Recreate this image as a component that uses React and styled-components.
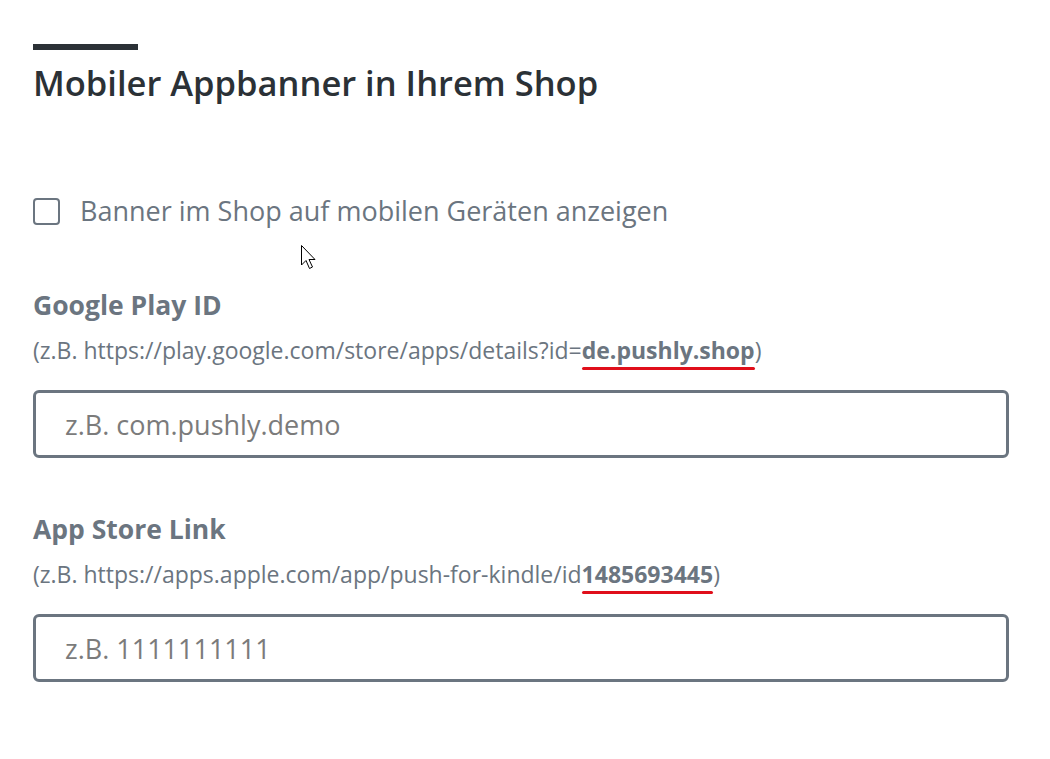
import styled, { createGlobalStyle } from 'styled-components'

const Global = createGlobalStyle`
    body {
        margin: 0;
        background: #fff;
        font-family: 'Open Sans', 'Noto Sans', sans-serif;
    }
`

const S = {}
S.Page = styled.div`
    position: relative;
    width: 1050px;
    height: 759px;
    padding: 44px 41px 0 33px;
    box-sizing: border-box;
`

S.Bar = styled.div`
    width: 105px;
    height: 6px;
    background: #2b3136;
`

S.Title = styled.h1`
    margin: 11px 0 0;
    font-size: 34.5px;
    line-height: 44px;
    font-weight: 600;
    color: #2b3136;
`

S.CheckRow = styled.label`
    display: flex;
    align-items: center;
    gap: 20px;
    margin-top: 90px;
`

S.Box = styled.span`
    width: 27px;
    height: 27px;
    box-sizing: border-box;
    border: 2px solid #6b7580;
    border-radius: 4px;
`

S.CheckText = styled.span`
    font-size: 27px;
    line-height: 32px;
    color: #6b7580;
`

S.Field = styled.div`
    margin-top: ${p => p.$top}px;
`

S.Label = styled.div`
    font-size: 26.5px;
    line-height: 34px;
    font-weight: 700;
    color: #6b7580;
`

S.Hint = styled.div`
    margin-top: 13px;
    font-size: 23px;
    line-height: 30px;
    color: #6b7580;
`

S.Mark = styled.b`
    position: relative;
    font-weight: 700;
    &::after {
        content: '';
        position: absolute;
        left: 0;
        right: 0;
        bottom: -4px;
        height: 3px;
        border-radius: 2px;
        background: #e00f1b;
    }
`

S.Input = styled.input`
    display: block;
    width: 100%;
    height: 68px;
    margin-top: 25px;
    box-sizing: border-box;
    border: 3px solid #6b7580;
    border-radius: 6px;
    padding: 0 29px;
    font-family: inherit;
    font-size: 27px;
    color: #333;
    outline: none;
    &::placeholder {
        color: #7b7b7b;
    }
`

S.Cursor = styled.svg`
    position: absolute;
    left: 300px;
    top: 244px;
`

const fields = [
    {
        label: 'Google Play ID',
        pre: '(z.B. https://play.google.com/store/apps/details?id=',
        mark: 'de.pushly.shop',
        placeholder: 'z.B. com.pushly.demo',
        top: 61
    },
    {
        label: 'App Store Link',
        pre: '(z.B. https://apps.apple.com/app/push-for-kindle/id',
        mark: '1485693445',
        placeholder: 'z.B. 1111111111',
        top: 54
    }
]

export default function App() {
    return (
        <S.Page>
            <Global />
            <S.Bar />
            <S.Title>Mobiler Appbanner in Ihrem Shop</S.Title>
            <S.CheckRow>
                <S.Box />
                <S.CheckText>Banner im Shop auf mobilen Geräten anzeigen</S.CheckText>
            </S.CheckRow>
            {fields.map(f => (
                <S.Field key={f.label} $top={f.top}>
                    <S.Label>{f.label}</S.Label>
                    <S.Hint>
                        {f.pre}
                        <S.Mark>{f.mark}</S.Mark>)
                    </S.Hint>
                    <S.Input placeholder={f.placeholder} />
                </S.Field>
            ))}
            <S.Cursor width="20" height="28" viewBox="0 0 20 28">
                <path
                    d="M1.5 1.5 L1.5 21 L6 16.5 L9.5 24.5 L12.5 23 L9 15.5 L15 15.5 Z"
                    fill="#fff"
                    stroke="#000"
                    strokeWidth="1"
                    strokeLinejoin="round"
                />
            </S.Cursor>
        </S.Page>
    )
}
